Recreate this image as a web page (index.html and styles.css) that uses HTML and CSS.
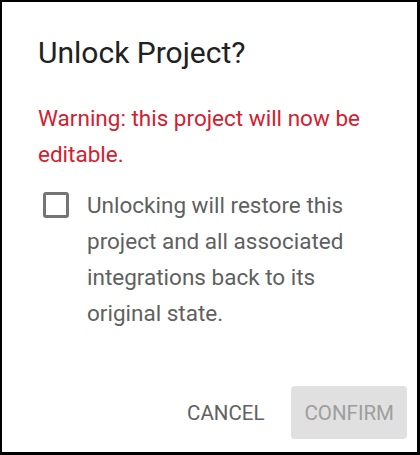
FILE: index.html
```html
<!DOCTYPE html>
<html lang="en">
<head>
  <meta charset="UTF-8" />
  <meta name="viewport" content="width=device-width, initial-scale=1.0" />
  <title>Unlock Project</title>
  <link rel="stylesheet" href="styles.css">
</head>
<body>
  <div class="dialog">
    <h2 class="dialog-title">Unlock Project?</h2>
    <div class="dialog-content">
      <p class="warning">Warning: this project will now be editable.</p>
      <label class="check-row">
        <span class="checkbox"></span>
        <span class="check-label">Unlocking will restore this project and all associated integrations back to its original state.</span>
      </label>
    </div>
    <div class="dialog-actions">
      <button class="btn btn-text">CANCEL</button>
      <button class="btn btn-disabled" disabled>CONFIRM</button>
    </div>
  </div>
</body>
</html>
```

FILE: styles.css
```css
html, body {
  margin: 0;
  padding: 0;
}
body {
  font-family: Roboto, "Liberation Sans", sans-serif;
  background-color: #fff;
}
.dialog {
  box-sizing: border-box;
  width: 420px;
  height: 455px;
  border-style: solid;
  border-color: #000;
  border-width: 2px 3px 3px 2px;
  background-color: #fff;
  display: flex;
  flex-direction: column;
}
.dialog-title {
  margin: 0;
  padding: 27px 36px 0 36px;
  font-size: 30px;
  line-height: 48px;
  font-weight: 400;
  color: #212121;
}
.dialog-content {
  padding: 23px 36px 0 36px;
  flex: 1;
}
.warning {
  margin: 0;
  font-size: 22.5px;
  line-height: 36px;
  color: #d32030;
}
.check-row {
  display: flex;
  align-items: flex-start;
  gap: 18px;
  margin-top: 15px;
}
.checkbox {
  flex: none;
  box-sizing: border-box;
  width: 26px;
  height: 26px;
  margin: 5px 0 0 5px;
  border: 3px solid #757575;
  border-radius: 3px;
}
.check-label {
  font-size: 22.5px;
  line-height: 36px;
  color: #5f5f5f;
}
.dialog-actions {
  display: flex;
  justify-content: flex-end;
  gap: 14px;
  padding: 0 10px 13px 0;
}
.btn {
  height: 53px;
  padding: 0 13px;
  border: none;
  border-radius: 4px;
  font-family: Roboto, "Liberation Sans", sans-serif;
  font-size: 20.5px;
  font-weight: 400;
  background: transparent;
  cursor: pointer;
}
.btn-text {
  color: #616161;
}
.btn-disabled {
  background-color: #e0e0e0;
  color: #9e9e9e;
  cursor: default;
}
```
